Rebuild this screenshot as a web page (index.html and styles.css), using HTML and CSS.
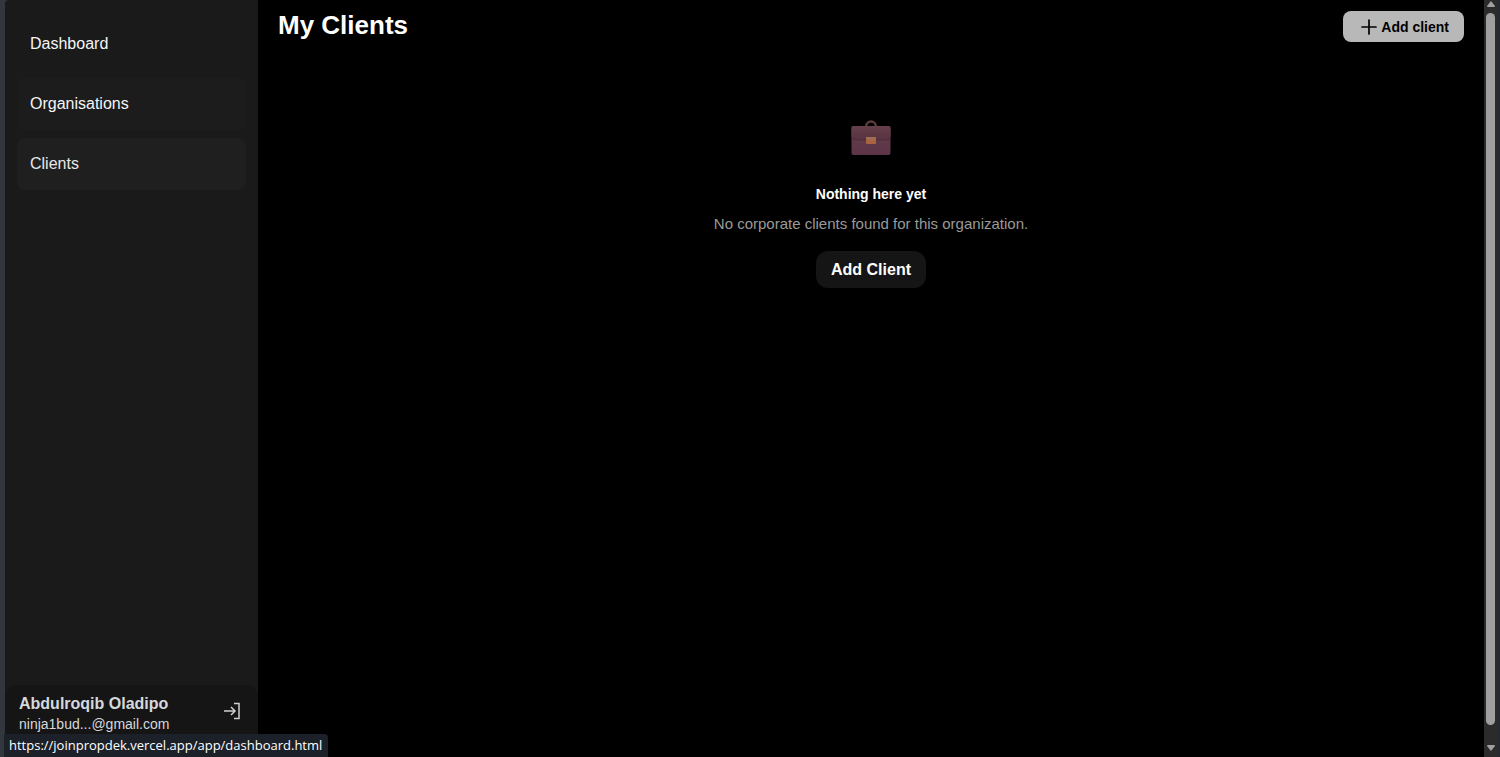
FILE: index.html
```html
<!DOCTYPE html>
<html lang="en">
<head>
  <meta charset="UTF-8" />
  <meta name="viewport" content="width=device-width, initial-scale=1.0" />
  <title>My Clients</title>
  <link rel="stylesheet" href="styles.css">
</head>
<body>
  <div class="app">
    <!-- Sidebar -->
    <aside class="sidebar">
      <nav class="nav">
        <a class="nav-link" href="#dashboard">Dashboard</a>
        <a class="nav-link visited" href="#organisations">Organisations</a>
        <a class="nav-link active" href="#clients">Clients</a>
      </nav>

      <div class="user">
        <div class="user-info">
          <div class="user-name">Abdulroqib Oladipo</div>
          <div class="user-email">ninja1bud...@gmail.com</div>
        </div>
        <button class="logout-btn" aria-label="Log out">
          <svg width="16" height="18" viewBox="0 0 16 18" fill="none" stroke="currentColor" stroke-width="1.500">
            <path d="M0 9h11M7 5l4 4-4 4M10 1.500h5v15h-5" />
          </svg>
        </button>
      </div>
    </aside>

    <!-- Main content -->
    <main class="main">
      <header class="header">
        <h1>My Clients</h1>
        <button class="add-btn">
          <svg width="16" height="16" viewBox="0 0 16 16" fill="none" stroke="currentColor" stroke-width="1.700" stroke-linecap="round">
            <path d="M8 1v14M1 8h14" />
          </svg>
          Add client
        </button>
      </header>

      <section class="empty">
        <svg class="empty-icon" width="40" height="36" viewBox="0 0 40 36">
          <defs>
            <linearGradient id="caseBody" x1="0" y1="0" x2="0" y2="1">
              <stop offset="0" stop-color="#68404c" />
              <stop offset="1" stop-color="#5b3447" />
            </linearGradient>
            <linearGradient id="caseFlap" x1="0" y1="0" x2="0" y2="1">
              <stop offset="0" stop-color="#663f49" />
              <stop offset="1" stop-color="#573340" />
            </linearGradient>
          </defs>
          <path d="M15 7a5 5.500 0 0 1 10 0" fill="none" stroke="#5c3a3b" stroke-width="2.500" />
          <rect x="0.500" y="6" width="39" height="29" rx="2" fill="url(#caseBody)" />
          <path d="M.5 8q0-2 2-2h35q2 0 2 2v8q0 4-4 4h-31q-4 0-4-4z" fill="url(#caseFlap)" />
          <path d="M.5 16q0 4 4 4h31q4 0 4-4" fill="none" stroke="#4d2c3a" />
          <rect x="15" y="17" width="10" height="7" rx="1" fill="#a9633f" />
          <rect x="15" y="17" width="10" height="3" rx="1" fill="#a36c52" />
        </svg>
        <h2>Nothing here yet</h2>
        <p>No corporate clients found for this organization.</p>
        <button class="empty-btn">Add Client</button>
      </section>
    </main>

    <!-- Scrollbar -->
    <div class="scrollbar">
      <svg width="8" height="6" viewBox="0 0 8 6" fill="currentColor"><path d="M4 0l4 5q0 1-1 1H1q-1 0-1-1z" /></svg>
      <div class="scroll-thumb"></div>
      <svg width="8" height="6" viewBox="0 0 8 6" fill="currentColor"><path d="M4 6L0 1q0-1 1-1h6q1 0 1 1z" /></svg>
    </div>
  </div>

  <div class="link-status">https://joinpropdek.vercel.app/app/dashboard.html</div>
</body>
</html>
```
FILE: styles.css
```css
* {
  box-sizing: border-box;
}

body {
  margin: 0;
  background: #32363d;
  color: #fff;
  font-family: "Liberation Sans", Arial, sans-serif;
  font-size: 16px;
}

button {
  font-family: inherit;
  border: none;
  cursor: pointer;
}

h1,
h2,
p {
  margin: 0;
}

.app {
  display: flex;
  height: 100vh;
  padding-left: 5px;
}

/* Sidebar */
.sidebar {
  display: flex;
  flex-direction: column;
  justify-content: space-between;
  width: 253px;
  background: #1a1a1a;
  border-top-left-radius: 4px;
}

.nav {
  display: flex;
  flex-direction: column;
  gap: 8px;
  padding: 18px 12px;
}

.nav-link {
  padding: 0 13px;
  line-height: 52px;
  border-radius: 8px;
  color: #f5f5f5;
  text-decoration: none;
}

.nav-link.visited {
  background: #1c1c1c;
}

.nav-link.active {
  background: #1f1f1f;
  color: #e8e8e8;
}

.user {
  display: flex;
  justify-content: space-between;
  align-items: flex-start;
  height: 72px;
  padding: 9px 18px 0 14px;
  background: #151515;
  border-radius: 12px 12px 0 0;
  color: #d6d9dc;
}

.user-name {
  font-weight: bold;
  line-height: 20px;
}

.user-email {
  font-size: 14px;
  line-height: 20px;
}

.logout-btn {
  display: flex;
  padding: 8px 0;
  background: none;
  color: #d0d0d0;
}

/* Main */
.main {
  flex: 1;
  background: #000;
}

.header {
  display: flex;
  justify-content: space-between;
  align-items: flex-start;
  padding: 11px 20px 10px;
}

.header h1 {
  font-size: 26px;
  line-height: 28px;
}

.add-btn {
  display: flex;
  align-items: center;
  gap: 4px;
  height: 31px;
  padding: 0 15px 0 18px;
  background: #b8b8b8;
  color: #000;
  border-radius: 8px;
  font-size: 14px;
  font-weight: bold;
}

.empty {
  display: flex;
  flex-direction: column;
  align-items: center;
  padding-top: 68px;
}

.empty-icon {
  margin-bottom: 28px;
}

.empty h2 {
  font-size: 14px;
  line-height: 20px;
  margin-bottom: 10px;
}

.empty p {
  font-size: 15px;
  line-height: 20px;
  color: #9a9a9a;
  margin-bottom: 17px;
}

.empty-btn {
  height: 37px;
  padding: 0 15px;
  background: #151515;
  color: #fff;
  border-radius: 12px;
  font-size: 16px;
  font-weight: bold;
}

/* Scrollbar */
.scrollbar {
  display: flex;
  flex-direction: column;
  align-items: center;
  gap: 6px;
  width: 16px;
  padding: 1px 1px 6px 0;
  background: #2b2b2b;
  border-right: 2px solid #252932;
  color: #a0a0a0;
}

.scroll-thumb {
  flex: 1;
  width: 9px;
  margin-bottom: 14px;
  background: #9f9f9f;
  border-radius: 5px;
}

/* Link preview over the page */
.link-status {
  position: absolute;
  left: 4px;
  bottom: 0;
  padding: 0 6px 0 5px;
  background: #1c2028;
  border-top-right-radius: 4px;
  font-family: "Open Sans", "Noto Sans", sans-serif;
  font-size: 13px;
  line-height: 23px;
}
```
